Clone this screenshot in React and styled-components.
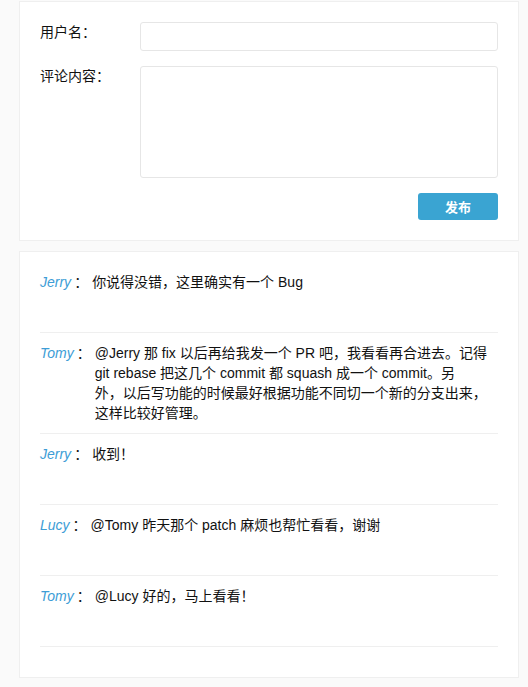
import React from "react";
import styled, { createGlobalStyle } from "styled-components";

const GlobalStyle = createGlobalStyle`
  html, body {
    margin: 0;
    padding: 0;
    background: #fafafa;
  }
  body {
    font-family: "Liberation Sans", Helvetica, Arial, "Noto Sans CJK SC", sans-serif;
    font-size: 14px;
    color: #111;
  }
  * { box-sizing: border-box; }
`;

const Page = styled.div`
  width: 500px;
  padding: 1px 0 0 19px;
  box-sizing: content-box;
`;

const Card = styled.div`
  width: 500px;
  background: #fff;
  border: 1px solid #efefef;
  padding: 20px;
  margin-bottom: 10px;
`;

const Field = styled.div`
  display: flex;
  margin-bottom: 15px;
`;

const FieldName = styled.div`
  flex: 0 0 100px;
  font-size: 14px;
  line-height: 20px;
  color: #111;
`;

const FieldInput = styled.div`
  display: flex;
  flex: 1;
`;

const TextInput = styled.input`
  flex: 1;
  height: 29px;
  border: 1px solid #e6e6e6;
  border-radius: 3px;
  padding: 5px;
  outline: none;
  font-size: 14px;
  font-family: inherit;
`;

const TextArea = styled.textarea`
  flex: 1;
  height: 112px;
  border: 1px solid #e6e6e6;
  border-radius: 3px;
  padding: 5px;
  outline: none;
  resize: none;
  font-size: 14px;
  font-family: inherit;
`;

const ButtonRow = styled.div`
  display: flex;
  justify-content: flex-end;
`;

const Button = styled.button`
  width: 80px;
  height: 27px;
  border: none;
  border-radius: 3px;
  background: #3aa4d2;
  color: #fff;
  font-size: 13px;
  font-weight: bold;
  font-family: inherit;
  cursor: pointer;
`;

const Comment = styled.div`
  display: flex;
  border-bottom: 1px solid #efefef;
  margin-bottom: 10px;
  padding-bottom: 10px;
  min-height: 61px;
  line-height: 20px;
  font-size: 14px;
`;

const User = styled.span`
  flex-shrink: 0;
  color: #111;
  margin-right: 4px;
`;

const Colon = styled.span`
  padding-left: 3px;
`;

const UserName = styled.span`
  color: #3d9dd6;
  font-style: italic;
`;

const Content = styled.div`
  flex: 1;
  color: #111;
  padding-right: 10px;
  white-space: pre-line;
`;

const comments = [
  { user: "Jerry", text: "你说得没错，这里确实有一个 Bug" },
  {
    user: "Tomy",
    text: "@Jerry 那 fix 以后再给我发一个 PR 吧，我看看再合进去。记得 git rebase 把这几个 commit 都 squash 成一个 commit。另\n外，以后写功能的时候最好根据功能不同切一个新的分支出来，这样比较好管理。",
  },
  { user: "Jerry", text: "收到！" },
  { user: "Lucy", text: "@Tomy 昨天那个 patch 麻烦也帮忙看看，谢谢" },
  { user: "Tomy", text: "@Lucy 好的，马上看看！" },
];

export default function App() {
  return (
    <>
      <GlobalStyle />
      <Page>
        <Card>
          <Field>
            <FieldName>用户名：</FieldName>
            <FieldInput>
              <TextInput />
            </FieldInput>
          </Field>
          <Field>
            <FieldName>评论内容：</FieldName>
            <FieldInput>
              <TextArea />
            </FieldInput>
          </Field>
          <ButtonRow>
            <Button>发布</Button>
          </ButtonRow>
        </Card>
        <Card>
          {comments.map((c, i) => (
            <Comment key={i}>
              <User>
                <UserName>{c.user}</UserName>
                <Colon>：</Colon>
              </User>
              <Content>{c.text}</Content>
            </Comment>
          ))}
        </Card>
      </Page>
    </>
  );
}
